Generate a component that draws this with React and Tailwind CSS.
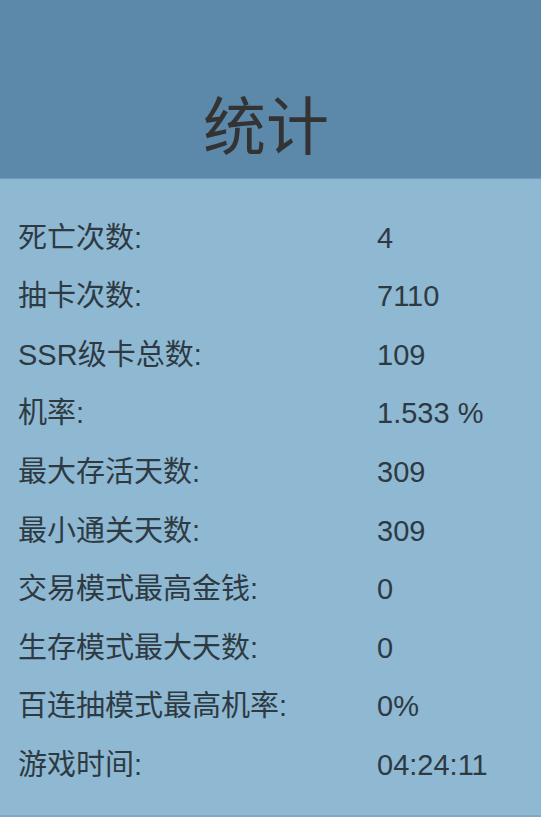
import React from "react";

const rows = [
  ["死亡次数:", "4"],
  ["抽卡次数:", "7110"],
  ["SSR级卡总数:", "109"],
  ["机率:", "1.533 %"],
  ["最大存活天数:", "309"],
  ["最小通关天数:", "309"],
  ["交易模式最高金钱:", "0"],
  ["生存模式最大天数:", "0"],
  ["百连抽模式最高机率:", "0%"],
  ["游戏时间:", "04:24:11"],
];

export default function App() {
  return (
    <div
      className="w-[541px] h-[817px] flex flex-col bg-[#8fb8d3] text-[#2e3a42]"
      style={{ fontFamily: '"Liberation Sans", "Noto Sans CJK SC", sans-serif' }}
    >
      <div className="h-[179px] shrink-0 bg-[#5c88a9] flex justify-center items-start border-b border-[#6f9abb] pt-[92px] pr-[9px]">
        <span className="text-[63px] leading-[70px] text-[#333333]">统计</span>
      </div>
      <div className="flex flex-col pt-[30px] flex-1 border-b-2 border-[#7fa9c4]">
        {rows.map(([k, v]) => (
          <div key={k} className="h-[58.56px] flex items-center text-[29px] leading-none">
            <span className="w-[377px] pl-[18px]">{k}</span>
            <span>{v}</span>
          </div>
        ))}
      </div>
    </div>
  );
}
